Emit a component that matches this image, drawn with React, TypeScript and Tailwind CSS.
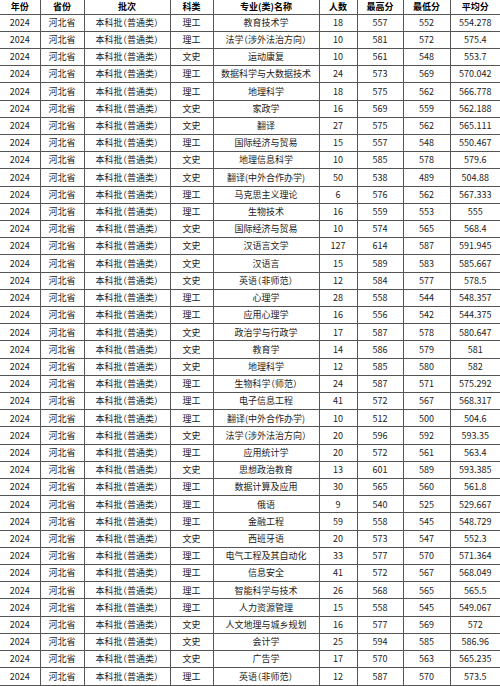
import React from 'react';

type Row = [string, string, number, number, number, string];

// 专业名称, 科类, 人数, 最高分, 最低分, 平均分
const rows: Row[] = [
  ['教育技术学', '理工', 18, 557, 552, '554.278'],
  ['法学（涉外法治方向）', '理工', 10, 581, 572, '575.4'],
  ['运动康复', '文史', 10, 561, 548, '553.7'],
  ['数据科学与大数据技术', '理工', 24, 573, 569, '570.042'],
  ['地理科学', '理工', 18, 575, 562, '566.778'],
  ['家政学', '文史', 16, 569, 559, '562.188'],
  ['翻译', '文史', 27, 575, 562, '565.111'],
  ['国际经济与贸易', '理工', 15, 557, 548, '550.467'],
  ['地理信息科学', '文史', 10, 585, 578, '579.6'],
  ['翻译(中外合作办学)', '文史', 50, 538, 489, '504.88'],
  ['马克思主义理论', '理工', 6, 576, 562, '567.333'],
  ['生物技术', '理工', 16, 559, 553, '555'],
  ['国际经济与贸易', '文史', 10, 574, 565, '568.4'],
  ['汉语言文学', '文史', 127, 614, 587, '591.945'],
  ['汉语言', '文史', 15, 589, 583, '585.667'],
  ['英语（非师范）', '文史', 12, 584, 577, '578.5'],
  ['心理学', '理工', 28, 558, 544, '548.357'],
  ['应用心理学', '理工', 16, 556, 542, '544.375'],
  ['政治学与行政学', '文史', 17, 587, 578, '580.647'],
  ['教育学', '文史', 14, 586, 579, '581'],
  ['地理科学', '文史', 12, 585, 580, '582'],
  ['生物科学（师范）', '理工', 24, 587, 571, '575.292'],
  ['电子信息工程', '理工', 41, 572, 567, '568.317'],
  ['翻译(中外合作办学)', '理工', 10, 512, 500, '504.6'],
  ['法学（涉外法治方向）', '文史', 20, 596, 592, '593.35'],
  ['应用统计学', '理工', 20, 572, 561, '563.4'],
  ['思想政治教育', '文史', 13, 601, 589, '593.385'],
  ['数据计算及应用', '理工', 30, 565, 560, '561.8'],
  ['俄语', '理工', 9, 540, 525, '529.667'],
  ['金融工程', '理工', 59, 558, 545, '548.729'],
  ['西班牙语', '文史', 20, 573, 547, '552.3'],
  ['电气工程及其自动化', '理工', 33, 577, 570, '571.364'],
  ['信息安全', '理工', 41, 572, 567, '568.049'],
  ['智能科学与技术', '理工', 26, 568, 565, '565.5'],
  ['人力资源管理', '理工', 15, 558, 545, '549.067'],
  ['人文地理与城乡规划', '文史', 16, 577, 569, '572'],
  ['会计学', '文史', 25, 594, 585, '586.96'],
  ['广告学', '文史', 17, 570, 563, '565.235'],
  ['英语（非师范）', '理工', 12, 587, 570, '573.5'],
];

const headers = ['年份', '省份', '批次', '科类', '专业(类)名称', '人数', '最高分', '最低分', '平均分'];
const widths = ['w-[40px]', 'w-[44px]', 'w-[86px]', 'w-[43px]', 'w-[106px]', 'w-[38px]', 'w-[46px]', 'w-[47px]', 'w-[50px]'];

const cell = 'border-b border-r border-[#555] p-0 text-center align-middle whitespace-nowrap last:border-r-0';
// full-width brackets are set narrow in the original
const narrow = "[font-feature-settings:'halt']";

export default function App() {
  return (
    <div className="h-[686px] w-[500px] overflow-hidden bg-white font-['Noto_Sans_CJK_SC','Noto_Sans',sans-serif] text-[9px] text-[#222]">
      <table className="h-[686px] w-[500px] table-fixed border-collapse">
        <colgroup>
          {widths.map((w, i) => (
            <col key={i} className={w} />
          ))}
        </colgroup>
        <thead>
          <tr>
            {headers.map((h) => (
              <th key={h} className={`${cell} font-bold text-black`}>
                {h}
              </th>
            ))}
          </tr>
        </thead>
        <tbody>
          {rows.map((r, i) => (
            <tr key={i}>
              <td className={cell}>2024</td>
              <td className={cell}>河北省</td>
              <td className={`${cell} ${narrow}`}>本科批（普通类）</td>
              <td className={cell}>{r[1]}</td>
              <td className={`${cell} ${narrow}`}>{r[0]}</td>
              <td className={cell}>{r[2]}</td>
              <td className={cell}>{r[3]}</td>
              <td className={cell}>{r[4]}</td>
              <td className={cell}>{r[5]}</td>
            </tr>
          ))}
        </tbody>
      </table>
    </div>
  );
}
